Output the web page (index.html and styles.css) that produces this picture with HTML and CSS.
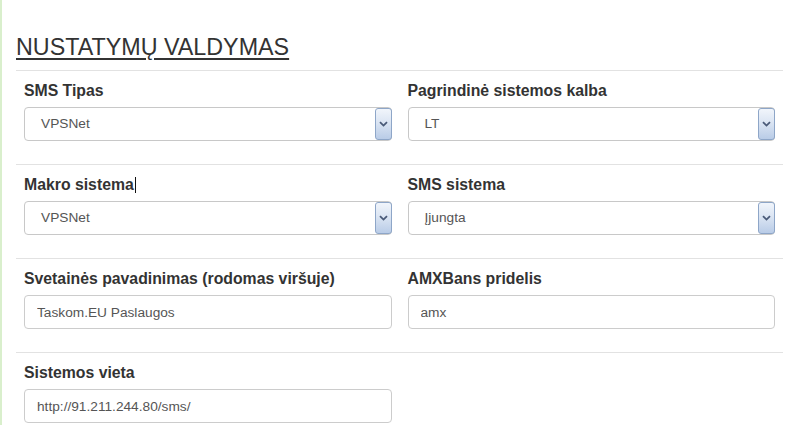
FILE: index.html
```html
<!DOCTYPE html>
<html lang="lt">
<head>
<meta charset="utf-8">
<title>Nustatymų valdymas</title>
<link rel="stylesheet" href="styles.css">
</head>
<body>
<div class="page">
  <h2 class="title">NUSTATYMŲ VALDYMAS</h2>

  <div class="row">
    <div class="field">
      <label class="label">SMS Tipas</label>
      <div class="select"><span class="value">VPSNet</span><span class="arrow"><svg width="9" height="6" viewBox="0 0 9 6"><path d="M1 1.2 L4.5 4.6 L8 1.2" fill="none" stroke="#4a5a78" stroke-width="1.8"/></svg></span></div>
    </div>
    <div class="field">
      <label class="label">Pagrindinė sistemos kalba</label>
      <div class="select"><span class="value">LT</span><span class="arrow"><svg width="9" height="6" viewBox="0 0 9 6"><path d="M1 1.2 L4.5 4.6 L8 1.2" fill="none" stroke="#4a5a78" stroke-width="1.8"/></svg></span></div>
    </div>
  </div>

  <div class="row">
    <div class="field">
      <label class="label">Makro sistema<span class="caret"></span></label>
      <div class="select"><span class="value">VPSNet</span><span class="arrow"><svg width="9" height="6" viewBox="0 0 9 6"><path d="M1 1.2 L4.5 4.6 L8 1.2" fill="none" stroke="#4a5a78" stroke-width="1.8"/></svg></span></div>
    </div>
    <div class="field">
      <label class="label">SMS sistema</label>
      <div class="select"><span class="value">Įjungta</span><span class="arrow"><svg width="9" height="6" viewBox="0 0 9 6"><path d="M1 1.2 L4.5 4.6 L8 1.2" fill="none" stroke="#4a5a78" stroke-width="1.8"/></svg></span></div>
    </div>
  </div>

  <div class="row">
    <div class="field">
      <label class="label">Svetainės pavadinimas (rodomas viršuje)</label>
      <input class="input" type="text" value="Taskom.EU Paslaugos">
    </div>
    <div class="field">
      <label class="label">AMXBans pridelis</label>
      <input class="input" type="text" value="amx">
    </div>
  </div>

  <div class="row">
    <div class="field">
      <label class="label">Sistemos vieta</label>
      <input class="input" type="text" value="http://91.211.244.80/sms/">
    </div>
    <div class="field"></div>
  </div>
</div>
</body>
</html>
```

FILE: styles.css
```css
html, body {
  margin: 0;
  padding: 0;
  background: #ffffff;
}
body {
  border-left: 2px solid #d9efcc;
  min-height: 425px;
  box-sizing: border-box;
  font-family: "Liberation Sans", Arial, sans-serif;
  color: #333333;
}
.page {
  margin: 0 7px 0 14px;
}
.title {
  margin: 0;
  padding-top: 34px;
  height: 26px;
  line-height: 26px;
  font-size: 23.3px;
  font-weight: normal;
  color: #333333;
  text-decoration: underline;
  text-decoration-thickness: 2px;
  text-underline-offset: 3px;
  margin-bottom: 10px;
}
.row {
  border-top: 1px solid #e2e2e2;
  display: grid;
  grid-template-columns: 1fr 1fr;
  padding: 9px 0 23px;
}
.field {
  padding: 0 8px;
  display: flex;
  flex-direction: column;
}
.label {
  display: block;
  font-size: 15.8px;
  line-height: 22px;
  font-weight: bold;
  color: #333333;
  margin-bottom: 5px;
}
.caret {
  display: inline-block;
  width: 1px;
  height: 16px;
  background: #111;
  vertical-align: -3px;
  margin-left: 1px;
}
.select {
  height: 34px;
  box-sizing: border-box;
  border: 1px solid #c8c8c8;
  border-radius: 4px;
  display: flex;
  align-items: stretch;
  background: #fff;
}
.value {
  flex: 1;
  padding-left: 16px;
  font-size: 13.7px;
  line-height: 32px;
  color: #555555;
}
.arrow {
  width: 17px;
  box-sizing: border-box;
  border: 1px solid #8ea6c8;
  border-radius: 3px;
  background: linear-gradient(#f1f5fb, #dbe5f3 45%, #b9cce7);
  display: flex;
  align-items: center;
  justify-content: center;
  margin: 0 -1px 0 0;
}
.input {
  height: 34px;
  box-sizing: border-box;
  border: 1px solid #cccccc;
  border-radius: 4px;
  padding: 0 12px;
  font-family: "Liberation Sans", Arial, sans-serif;
  font-size: 13.7px;
  color: #555555;
  outline: none;
  width: 100%;
}
```
